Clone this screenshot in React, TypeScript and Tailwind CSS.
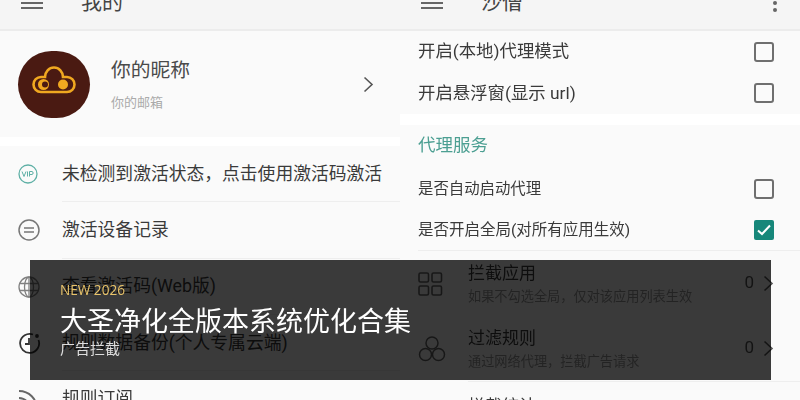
import React from "react";

const cjk = "font-['Roboto','Noto_Sans_CJK_SC','Noto_Sans',sans-serif]";

function Bars() {
  return (
    <svg width="22" height="14" viewBox="0 0 22 14" fill="none" stroke="#666" strokeWidth="2">
      <path d="M0 2H22M0 7H22M0 12H22" />
    </svg>
  );
}

function Chevron({ className = "" }: { className?: string }) {
  return (
    <svg className={className} width="11" height="17" viewBox="0 0 11 17" fill="none" stroke="#555" strokeWidth="1.6">
      <path d="M1.5 1.5L9 8.5L1.5 15.5" />
    </svg>
  );
}

function Logo() {
  return (
    <svg width="44" height="28" viewBox="0 0 44 28" fill="none">
      <path
        d="M9 26H35A7.500 7.500 0 0 0 35 11H31A9 9.500 0 0 0 13 11H9A7.500 7.500 0 0 0 9 26Z"
        stroke="#f0a820"
        strokeWidth="2.600"
      />
      <circle cx="11.500" cy="18.500" r="5.500" fill="#f0a820" />
      <circle cx="13" cy="18.500" r="3" fill="#4a1a12" />
      <circle cx="31" cy="18.500" r="5" fill="#f0a820" />
    </svg>
  );
}

function VipIcon() {
  return (
    <svg width="22" height="22" viewBox="0 0 22 22" fill="none">
      <circle cx="11" cy="11" r="9" stroke="#5fb0a6" strokeWidth="1.300" />
      <path d="M5 8.500L7 13.500L9 8.500M10.500 8.500V13.500M12.500 13.500V8.500H15C16.500 8.500 16.500 11.500 15 11.500H12.500" stroke="#5fb0a6" strokeWidth="1" />
    </svg>
  );
}

function ListIcon() {
  return (
    <svg width="24" height="24" viewBox="0 0 24 24" fill="none" stroke="#777" strokeWidth="1.500">
      <circle cx="12" cy="12" r="10" />
      <path d="M7 10H17M7 14H17" />
    </svg>
  );
}

function GlobeIcon() {
  return (
    <svg width="24" height="24" viewBox="0 0 24 24" fill="none" stroke="#808080" strokeWidth="1.300">
      <circle cx="12" cy="12" r="10" />
      <ellipse cx="12" cy="12" rx="4.500" ry="10" />
      <path d="M2.500 8.500H21.500M2.500 15.500H21.500M12 2V22" />
    </svg>
  );
}

function ClockIcon() {
  return (
    <svg width="24" height="24" viewBox="0 0 24 24" fill="none" stroke="#333" strokeWidth="1.800">
      <path d="M16 3.500A9.500 9.500 0 1 0 21.500 9" />
      <path d="M12 7V13H8" />
      <circle cx="20" cy="5" r="1" fill="#333" />
    </svg>
  );
}

function RssIcon() {
  return (
    <svg width="24" height="24" viewBox="0 0 24 24" fill="none" stroke="#666" strokeWidth="2">
      <path d="M2 4C12 4 20 12 20 22M2 11C8 11 13 16 13 22" />
    </svg>
  );
}

function GridIcon() {
  return (
    <svg width="25" height="24" viewBox="0 0 25 24" fill="none" stroke="#666" strokeWidth="1.600">
      <rect x="1" y="1" width="9.500" height="9" rx="1.500" />
      <rect x="14" y="1" width="9.500" height="9" rx="1.500" />
      <rect x="1" y="14" width="9.500" height="9" rx="1.500" />
      <rect x="14" y="14" width="9.500" height="9" rx="1.500" />
    </svg>
  );
}

function CirclesIcon() {
  return (
    <svg width="28" height="26" viewBox="0 0 28 26" fill="none" stroke="#666" strokeWidth="1.500">
      <circle cx="14" cy="7" r="6" />
      <circle cx="7.500" cy="18.500" r="6" />
      <circle cx="20.500" cy="18.500" r="6" />
    </svg>
  );
}

function Box({ checked = false }: { checked?: boolean }) {
  return checked ? (
    <div className="flex h-[20px] w-[20px] items-center justify-center rounded-[2px] bg-[#17877a]">
      <svg width="14" height="12" viewBox="0 0 14 12" fill="none" stroke="#fff" strokeWidth="2">
        <path d="M1 6.500L5 10L13 1.500" />
      </svg>
    </div>
  ) : (
    <div className="h-[20px] w-[20px] rounded-[3px] border-2 border-[#6f6f6f]" />
  );
}

function Header({ title, more = false }: { title: string; more?: boolean }) {
  return (
    <div className="relative z-10 -mt-[24px] flex h-[55px] shrink-0 items-center border-b-2 border-[#ececec] bg-[#f5f5f5] pl-[21px] pr-[23px]">
      <Bars />
      <span className="ml-[38px] text-[21px] text-[#444]">{title}</span>
      {more && (
        <div className="ml-auto flex flex-col gap-[3px]">
          <span className="h-[4px] w-[4px] rounded-full bg-[#666]" />
          <span className="h-[4px] w-[4px] rounded-full bg-[#666]" />
          <span className="h-[4px] w-[4px] rounded-full bg-[#666]" />
        </div>
      )}
    </div>
  );
}

function MenuRow({ icon, label, divider = true }: { icon: React.ReactNode; label: string; divider?: boolean }) {
  return (
    <div className="flex h-[56.25px] shrink-0 items-center pl-[17px]">
      <div className="flex w-[45px] shrink-0">{icon}</div>
      <div className={`flex h-full flex-1 items-center pt-px text-[17.800px] text-[#3a3a3a] ${divider ? "border-b border-[#eeeeee]" : ""}`}>
        {label}
      </div>
    </div>
  );
}

function CheckRow({ label, h, size, checked = false, low = false }: { label: string; h: string; size: string; checked?: boolean; low?: boolean }) {
  return (
    <div className={`flex shrink-0 items-center justify-between pl-[18px] pr-[26px] text-[#3a3a3a] ${h} ${size}`}>
      <span className={low ? "pt-[2px]" : ""}>{label}</span>
      <Box checked={checked} />
    </div>
  );
}

function RuleRow({ icon, title, sub }: { icon: React.ReactNode; title: string; sub: string }) {
  return (
    <div className="flex h-[65px] shrink-0 items-center pl-[18px] pr-[26px]">
      <div className="flex w-[50px] shrink-0">{icon}</div>
      <div className="flex flex-1 flex-col gap-[3px] pt-[3px]">
        <span className="text-[17px] leading-[21px] text-[#3a3a3a]">{title}</span>
        <span className="text-[13.200px] leading-[20px] text-[#999]">{sub}</span>
      </div>
      <span className="mr-[9px] pb-[2px] text-[17px] text-[#555]">0</span>
      <Chevron />
    </div>
  );
}

export default function App() {
  return (
    <div className={`relative h-[400px] w-[800px] overflow-hidden bg-white ${cjk}`}>
      <div className="flex h-full blur-[0.5px]">
        <div className="flex h-[425px] w-[400px] shrink-0 flex-col">
          <Header title="我的" />
          <div className="flex h-[106px] shrink-0 items-center bg-[#fafafa] pl-[18px] pr-[26px]">
            <div className="flex h-[67px] w-[72px] shrink-0 items-center justify-center rounded-full bg-[#4a1a12] pb-[9px]">
              <Logo />
            </div>
            <div className="ml-[21px] flex flex-1 flex-col gap-[9px] pt-px">
              <span className="text-[19.800px] leading-[28px] text-[#4a4a4a]">你的昵称</span>
              <span className="text-[13px] leading-[18px] text-[#aaa]">你的邮箱</span>
            </div>
            <Chevron />
          </div>
          <div className="mt-[9px] flex flex-col bg-[#fafafa]">
            <MenuRow icon={<VipIcon />} label="未检测到激活状态，点击使用激活码激活" />
            <MenuRow icon={<ListIcon />} label="激活设备记录" />
            <MenuRow icon={<GlobeIcon />} label="查看激活码(Web版)" />
            <MenuRow icon={<ClockIcon />} label="规则数据备份(个人专属云端)" />
            <MenuRow icon={<RssIcon />} label="规则订阅" divider={false} />
          </div>
        </div>

        <div className="flex h-[425px] w-[400px] shrink-0 flex-col">
          <Header title="沙僧" more />
          <div className="flex shrink-0 flex-col bg-[#fafafa] pb-px">
            <CheckRow label="开启(本地)代理模式" h="h-[41px]" size="text-[17.400px]" />
            <CheckRow label="开启悬浮窗(显示 url)" h="h-[41px]" size="text-[17.400px]" low />
          </div>
          <div className="mt-[11px] flex flex-col bg-[#fafafa]">
            <div className="flex h-[42px] shrink-0 items-center pb-[2px] pl-[18px] text-[17.500px] text-[#4c9f92]">代理服务</div>
            <CheckRow label="是否自动启动代理" h="h-[43px]" size="text-[15.400px]" low />
            <CheckRow label="是否开启全局(对所有应用生效)" h="h-[40px]" size="text-[15.500px]" checked low />
            <div className="ml-[18px] border-t border-[#eeeeee]" />
            <RuleRow icon={<GridIcon />} title="拦截应用" sub="如果不勾选全局，仅对该应用列表生效" />
            <RuleRow icon={<CirclesIcon />} title="过滤规则" sub="通过网络代理，拦截广告请求" />
            <div className="ml-[68px] border-t border-[#eeeeee]" />
            <div className="pl-[68px] pt-[14px] text-[17px] leading-[21px] text-[#3a3a3a]">拦截统计</div>
          </div>
        </div>
      </div>

      <div className="absolute left-[30px] top-[260px] flex h-[120px] w-[741px] flex-col bg-[rgba(0,0,0,0.77)] pl-[30px] pt-[19px] font-['Open_Sans','Noto_Sans_CJK_SC',sans-serif]">
        <span className="text-[13.600px] leading-[21px] text-[#e9c46a]">NEW 2026</span>
        <span className="mt-[3px] text-[27px] leading-[36px] text-white">大圣净化全版本系统优化合集</span>
        <span className="-mt-[2px] text-[15px] leading-[22px] text-[#dddddd]">广告拦截</span>
      </div>
    </div>
  );
}
